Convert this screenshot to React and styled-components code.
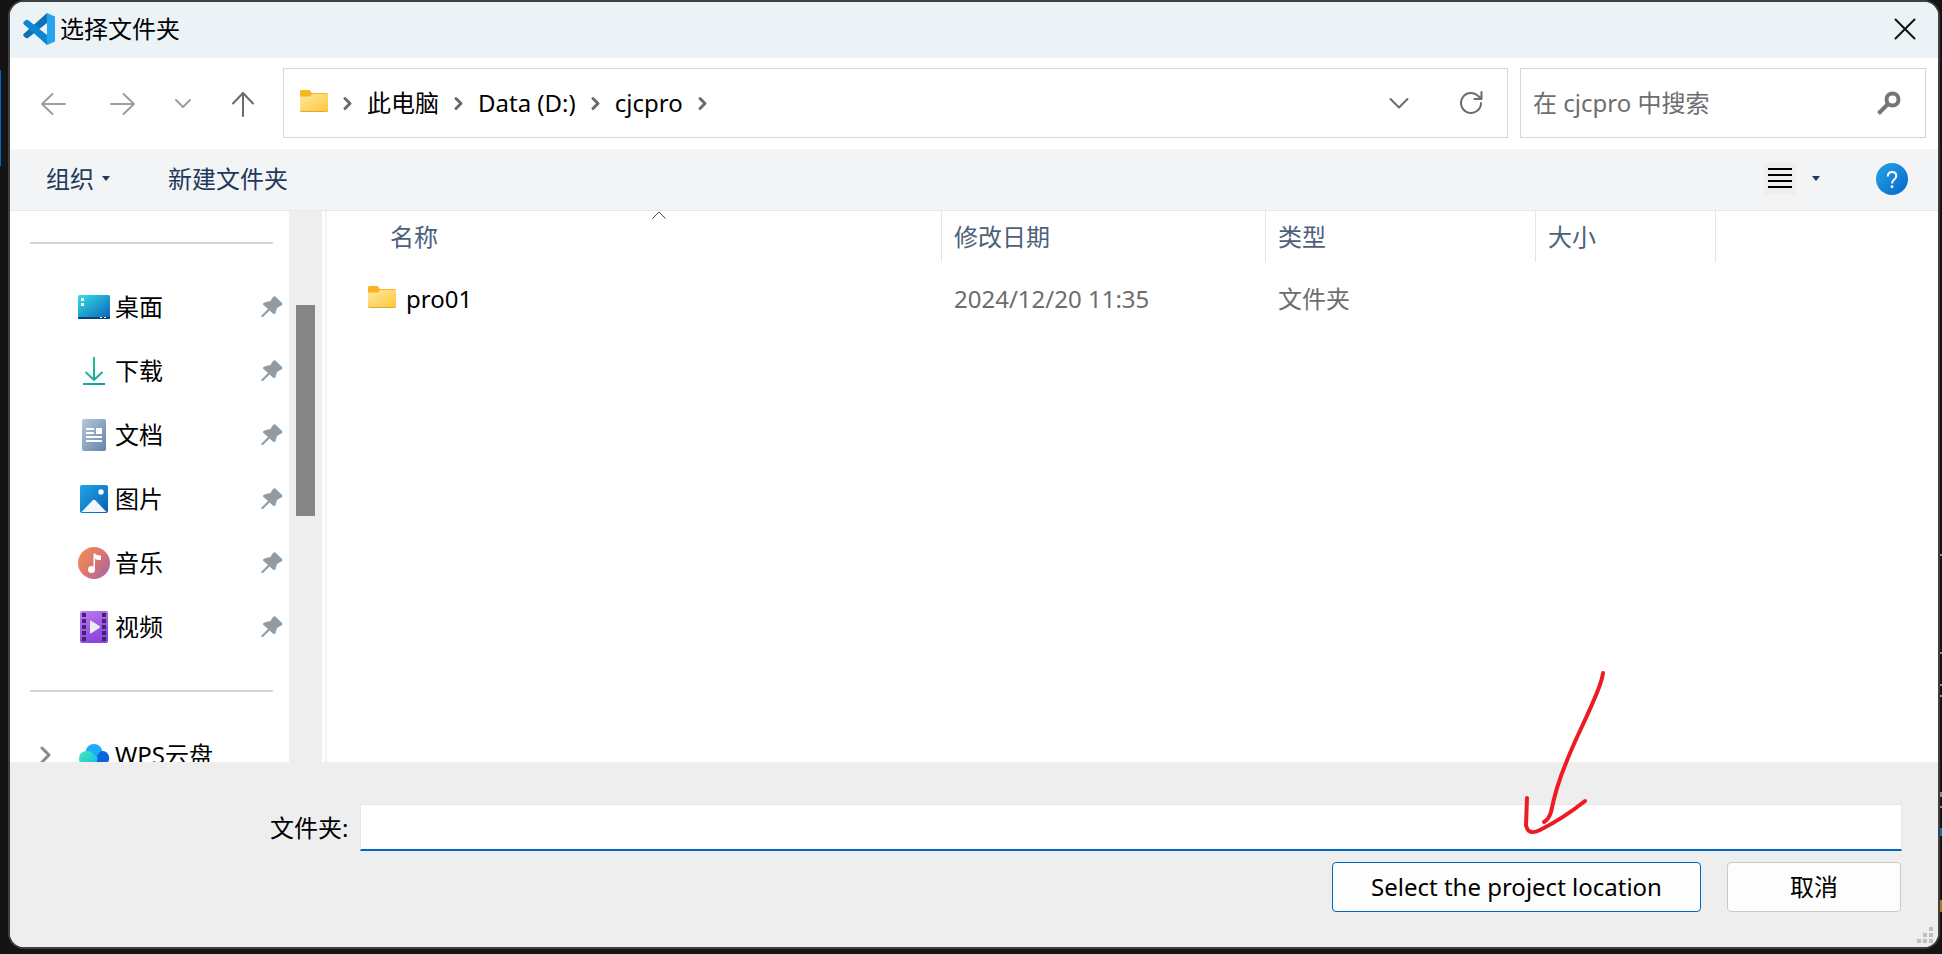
import React from 'react'
import styled, { createGlobalStyle } from 'styled-components'

const GlobalStyle = createGlobalStyle`
  * {
    box-sizing: border-box;
  }
  body {
    margin: 0;
    background: #141414;
    color: #000;
    font-family: "Noto Sans", "Noto Sans CJK SC", sans-serif;
    font-size: 24px;
    line-height: 32px;
  }
  button, input {
    font: inherit;
    color: inherit;
  }
  svg {
    display: block;
    flex: none;
  }
`
const Desktop = styled.div`
  position: relative;
  display: flex;
  height: 100vh;
  padding: 0 2px 5px 8px;
  overflow: hidden;
`
const EditorEdge = styled.svg`
  position: absolute;
  top: 0;
  ${props => props.$side}: 0;
`
const Dialog = styled.main`
  position: relative;
  flex: 1;
  min-width: 0;
  display: flex;
  flex-direction: column;
  border: 2px solid #404040;
  border-radius: 16px;
  background: #fff;
  overflow: hidden;
`
const TitleBar = styled.header`
  display: flex;
  align-items: center;
  gap: 5px;
  height: 56px;
  padding: 0 13px 2px;
  background: #ebf3f6;
`
const Title = styled.h1`
  flex: 1;
  margin: 0;
  font-size: 24px;
  font-weight: 400;
`
const IconButton = styled.button`
  flex: none;
  display: flex;
  align-items: center;
  justify-content: center;
  width: ${props => props.$width || 40}px;
  height: 40px;
  padding: 0;
  border: 0;
  background: none;
`
const AddressRow = styled.nav`
  display: flex;
  align-items: flex-start;
  gap: 12px;
  height: 91px;
  padding: 10px 12px 0 23px;
`
const NavButtons = styled.div`
  display: flex;
  align-items: center;
  gap: 20px;
  width: 238px;
  height: 72px;
`
const Crumbs = styled.div`
  flex: 1;
  display: flex;
  align-items: center;
  gap: 14px;
  height: 70px;
  padding: 0 16px;
  border: 1px solid #d6d6d6;
`
const Crumb = styled.a`
  color: #000;
  text-decoration: none;
`
const Spacer = styled.div`
  flex: 1;
`
const SearchBox = styled.label`
  display: flex;
  align-items: center;
  width: 406px;
  height: 70px;
  padding: 0 16px 0 12px;
  border: 1px solid #d6d6d6;
`
const SearchInput = styled.input`
  flex: 1;
  min-width: 0;
  padding: 0;
  border: 0;
  outline: 0;
  background: none;
  &::placeholder {
    color: #6d6d6d;
    opacity: 1;
  }
`
const Toolbar = styled.div`
  display: flex;
  align-items: center;
  height: 62px;
  padding: 0 26px 2px 36px;
  border-bottom: 1px solid #e5e6e8;
  background: #f3f4f6;
`
const ToolButton = styled.button`
  display: flex;
  align-items: center;
  gap: 8px;
  margin-right: 58px;
  padding: 0;
  border: 0;
  background: none;
  color: #1e395b;
`
const ViewButton = styled(ToolButton)`
  gap: 16px;
  margin-right: 52px;
`
const Body = styled.div`
  flex: 1;
  display: flex;
  min-height: 0;
`
const Sidebar = styled.aside`
  width: 279px;
  overflow: hidden;
`
const Divider = styled.hr`
  height: 2px;
  margin: 31px 16px 31px 20px;
  border: 0;
  background: #d5d5d5;
`
const Place = styled.a`
  display: flex;
  align-items: center;
  height: 64px;
  padding: 0 6px 0 28px;
  color: #000;
  text-decoration: none;
`
const Expander = styled.span`
  width: 40px;
`
const PlaceName = styled.span`
  flex: 1;
  padding-left: 5px;
`
const ScrollTrack = styled.div`
  width: 33px;
  padding: 94px 7px 0;
  background: #eee;
`
const ScrollThumb = styled.div`
  height: 211px;
  background: #858585;
`
const FilePane = styled.section`
  flex: 1;
  margin-left: 3px;
  border-left: 2px solid #f2f2f2;
`
const FileTable = styled.table`
  width: 100%;
  table-layout: fixed;
  border-collapse: separate;
  border-spacing: 0;
`
const HeadCell = styled.th`
  position: relative;
  width: ${props => (props.$width ? `${props.$width}px` : 'auto')};
  height: 51px;
  padding: 0 0 0 ${props => props.$indent || 12}px;
  border-right: ${props => (props.$width ? '1px solid #e5e5e5' : '0')};
  color: #4c607a;
  font-weight: 400;
  text-align: left;
`
const SortMark = styled.svg`
  position: absolute;
  top: 0;
  left: 53%;
`
const Cell = styled.td`
  height: 74px;
  padding: 0 0 0 12px;
  color: #6d6d6d;
`
const FileName = styled.div`
  display: flex;
  align-items: center;
  gap: 10px;
  padding-left: 29px;
  color: #000;
`
const Footer = styled.footer`
  height: 185px;
  padding: 42px 36px 0 260px;
  background: #eee;
`
const FieldRow = styled.label`
  display: flex;
  align-items: center;
  gap: 12px;
`
const FolderInput = styled.input`
  flex: 1;
  height: 47px;
  padding: 0 8px;
  border: 1px solid #e3e6ea;
  border-bottom: 2px solid #0067c0;
  outline: 0;
  background: #fff;
`
const Actions = styled.div`
  display: flex;
  justify-content: flex-end;
  gap: 26px;
  margin-top: 11px;
  padding-right: 1px;
`
const ActionButton = styled.button`
  width: ${props => props.$width}px;
  height: 50px;
  padding: 0;
  border: 1px solid ${props => (props.$primary ? '#0067c0' : '#cacaca')};
  border-radius: 4px;
  background: #fdfdfd;
`
const Grip = styled.svg`
  position: absolute;
  right: 5px;
  bottom: 4px;
`
const Marker = styled.svg`
  position: absolute;
  right: 318px;
  bottom: 102px;
`

const Stroke = ({ w, h, d, color = '#6b6b6b', weight = 2 }) => (
  <svg width={w} height={h} viewBox={`0 0 ${w} ${h}`} fill="none" stroke={color} strokeWidth={weight} strokeLinecap="round" strokeLinejoin="round">
    <path d={d} />
  </svg>
)

const Chevron = () => <Stroke w={11} h={16} d="M3 3.500 8 8.500 3 13.500" weight={3} />

const Caret = () => (
  <svg width="8" height="5" viewBox="0 0 8 5"><path d="M0 0h8L4 5z" fill="#1e395b" /></svg>
)

const CodeLogo = () => (
  <svg width="32" height="32" viewBox="0 0 32 32">
    <path d="M24 0 .8 20.800Q-.3 22 .8 23.200L3 25Q4 25.600 5 25L24 10z" fill="#0f72b5" />
    <path d="M24 32 .8 11.200Q-.3 10 .8 8.800L3 7Q4 6.400 5 7L24 22z" fill="#0a87d0" />
    <path d="M24 0 32 3.500V28.500L24 32z" fill="#28a4ee" />
  </svg>
)

const FolderIcon = () => (
  <svg width="28" height="26" viewBox="0 0 28 26">
    <defs>
      <linearGradient id="folder" x1="0" y1="0" x2="1" y2="1">
        <stop offset="0" stopColor="#ffe8a4" />
        <stop offset="1" stopColor="#fdc736" />
      </linearGradient>
    </defs>
    <path d="M0 1.500Q0 0 1.500 0H9.500L12 3H26.500Q28 3 28 4.500V10H0z" fill="#f9b41f" />
    <path d="M0 6.500H10L12.500 4H28V20.500Q28 22 26.500 22H1.500Q0 22 0 20.500z" fill="url(#folder)" />
    <path d="M.5 20.500Q.5 21.500 1.500 21.500H26.500Q27.500 21.500 27.500 20.500" fill="none" stroke="#e7a62b" />
  </svg>
)

const PinIcon = () => (
  <svg width="22" height="22" viewBox="0 0 22 22">
    <path d="M12 1Q13.500-.5 15 1L21 7Q22 8.500 20.500 9.500L16 12 14.500 17Q13.500 19 12 17.500L8.500 14.500 2 21H.5V19.500L7 13 2.500 9Q1 7.500 3.500 6.500L9.500 5z" fill="#919ba1" />
  </svg>
)

const placeIcons = {
  desktop: (
    <>
      <defs>
        <linearGradient id="desk" x1="0" y1="0" x2="1" y2="1">
          <stop offset="0" stopColor="#35dce8" />
          <stop offset="1" stopColor="#0b62b6" />
        </linearGradient>
      </defs>
      <rect y="4" width="32" height="24" rx="1.500" fill="url(#desk)" />
      <path d="M0 26h32v.5q0 1.500-1.500 1.500h-29Q0 28 0 26.500z" fill="#0b4275" />
      <path d="M3 7h3v3H3zM3 12h3v3H3zM22 26h2v1h-2zM26 26h2v1h-2z" fill="#fff" />
    </>
  ),
  download: (
    <>
      <defs>
        <linearGradient id="down" gradientUnits="userSpaceOnUse" x1="5" y1="2" x2="27" y2="30">
          <stop offset="0" stopColor="#33c481" />
          <stop offset="1" stopColor="#0c9caf" />
        </linearGradient>
      </defs>
      <path d="M16 2v23M7.500 17l8.500 8 8.500-8M5 29h22" fill="none" stroke="url(#down)" strokeWidth="2" />
    </>
  ),
  document: (
    <>
      <defs>
        <linearGradient id="doc" x1="0" y1="0" x2="1" y2="1">
          <stop offset="0" stopColor="#b3c8dd" />
          <stop offset="1" stopColor="#6583a8" />
        </linearGradient>
      </defs>
      <rect x="4" width="24" height="32" rx="2" fill="url(#doc)" />
      <path d="M8 9h8v2H8zM8 13h8v2H8zM18 9h6v6h-6zM8 17h16v2H8zM8 21h16v2H8z" fill="#fff" />
    </>
  ),
  picture: (
    <>
      <defs>
        <linearGradient id="pic" x1="0" y1="0" x2="1" y2="1">
          <stop offset="0" stopColor="#1fa5e8" />
          <stop offset="1" stopColor="#0a5fb0" />
        </linearGradient>
      </defs>
      <rect x="2" y="2" width="28" height="28" rx="2" fill="url(#pic)" />
      <path d="M3.500 29 14.500 17.500Q16 16 17.500 17.500L28.500 29z" fill="#f0f7fd" />
      <circle cx="23" cy="9" r="2.700" fill="#fff" />
    </>
  ),
  music: (
    <>
      <defs>
        <linearGradient id="mus" x1="0" y1=".2" x2="1" y2=".9">
          <stop offset="0" stopColor="#f18c54" />
          <stop offset=".5" stopColor="#d9766f" />
          <stop offset="1" stopColor="#a164ad" />
        </linearGradient>
      </defs>
      <circle cx="16" cy="16" r="16" fill="url(#mus)" />
      <circle cx="13.500" cy="22.500" r="3.500" fill="#fff" />
      <path d="M15.500 6.500h1.500Q19 9 23 8.500V13Q19 13.500 17 11.500V22.500h-1.500z" fill="#fff" />
    </>
  ),
  video: (
    <>
      <defs>
        <linearGradient id="vid" x1="0" y1="0" x2=".4" y2="1">
          <stop offset="0" stopColor="#bb7cf2" />
          <stop offset="1" stopColor="#8a45e0" />
        </linearGradient>
      </defs>
      <rect x="2" width="28" height="32" rx="2" fill="url(#vid)" />
      <path d="M6 2v28M26 2v28" stroke="#43246e" strokeWidth="4" strokeDasharray="4 2" />
      <path d="M12 10.500Q12 9 13.500 10L21.500 15Q22.500 16 21.500 17L13.500 22Q12 23 12 21.500z" fill="#eee" />
    </>
  ),
  cloud: (
    <>
      <defs>
        <linearGradient id="cloud" x1="0" y1="0" x2="1" y2="1">
          <stop offset="0" stopColor="#46efae" />
          <stop offset="1" stopColor="#10b6f8" />
        </linearGradient>
      </defs>
      <circle cx="16" cy="13.500" r="8.500" fill="#1eabfb" />
      <path d="M17 20 21 14Q24 10.500 28 13Q32 16 31 21Q29 27 24 27H12z" fill="#0d63dd" />
      <path d="M17 27H9Q1 26 1 19.500Q1 12 9 12Q14 12 16 16L20 19z" fill="url(#cloud)" />
    </>
  ),
}

const places = [
  { name: '桌面', icon: 'desktop' },
  { name: '下载', icon: 'download' },
  { name: '文档', icon: 'document' },
  { name: '图片', icon: 'picture' },
  { name: '音乐', icon: 'music' },
  { name: '视频', icon: 'video' },
]
const crumbs = ['此电脑', 'Data (D:)', 'cjcpro']
const files = [
  { name: 'pro01', modified: '2024/12/20 11:35', type: '文件夹' },
]

const PlaceIcon = ({ name }) => (
  <svg width="32" height="32" viewBox="0 0 32 32">{placeIcons[name]}</svg>
)

const App = () => (
  <Desktop>
    <GlobalStyle />
    <EditorEdge $side="left" width="8" height="166">
      <path d="M0 70h1v96H0z" fill="#0067c0" />
    </EditorEdge>
    <EditorEdge $side="right" width="2" height="954">
      <path d="M0 828h2v8H0z" fill="#0f6cb8" />
      <path d="M0 554h2v2H0zM0 652h2v2H0zM0 684h2v2H0zM0 695h2v2H0zM0 792h2v5H0zM0 806h2v2H0z" fill="#8d8d8d" />
      <path d="M0 900h2v12H0z" fill="#a5792b" />
    </EditorEdge>
    <Dialog>
      <TitleBar>
        <CodeLogo />
        <Title>选择文件夹</Title>
        <IconButton aria-label="关闭">
          <Stroke w={22} h={22} d="M1.500 1.500l19 19M20.500 1.500l-19 19" color="#111" />
        </IconButton>
      </TitleBar>
      <AddressRow>
        <NavButtons>
          <IconButton aria-label="后退">
            <Stroke w={26} h={24} d="M25 12H2M12.500 2 2 12l10.500 10" color="#9e9e9e" />
          </IconButton>
          <IconButton $width={60} aria-label="前进">
            <Stroke w={26} h={24} d="M1 12h23M13.500 2 24 12 13.500 22" color="#9e9e9e" />
          </IconButton>
          <IconButton $width={20} aria-label="最近浏览的位置">
            <Stroke w={18} h={12} d="M2 2l7 7 7-7" color="#9e9e9e" />
          </IconButton>
          <IconButton $width={60} aria-label="上移">
            <Stroke w={24} h={26} d="M12 25V2M2 12.500 12 2l10 10.500" />
          </IconButton>
        </NavButtons>
        <Crumbs>
          <FolderIcon />
          <Chevron />
          {crumbs.map(name => (
            <React.Fragment key={name}>
              <Crumb href="#">{name}</Crumb>
              <Chevron />
            </React.Fragment>
          ))}
          <Spacer />
          <IconButton $width={76} aria-label="以前的位置">
            <Stroke w={20} h={13} d="M1.500 2 10 10.500 18.500 2" />
          </IconButton>
          <IconButton aria-label="刷新">
            <Stroke w={24} h={24} d="M22 12a10 10 0 1 1-4-8L22 7.500M22.500 1v7H15.500" />
          </IconButton>
        </Crumbs>
        <SearchBox>
          <SearchInput placeholder="在 cjcpro 中搜索" aria-label="搜索" />
          <IconButton aria-label="搜索">
            <svg width="24" height="24" viewBox="0 0 24 24" fill="none" stroke="#767676">
              <circle cx="15.500" cy="8.500" r="6" strokeWidth="4" />
              <path d="M11 13 1.500 22.500" strokeWidth="4" />
            </svg>
          </IconButton>
        </SearchBox>
      </AddressRow>
      <Toolbar>
        <ToolButton>组织<Caret /></ToolButton>
        <ToolButton>新建文件夹</ToolButton>
        <Spacer />
        <ViewButton aria-label="更改视图">
          <svg width="32" height="32" viewBox="0 0 32 32">
            <rect width="32" height="32" rx="4" fill="#efefef" />
            <path d="M4 6h24M4 12h24M4 18h24M4 24h24" stroke="#000" strokeWidth="2" />
          </svg>
          <Caret />
        </ViewButton>
        <IconButton $width={40} aria-label="帮助">
          <svg width="32" height="32" viewBox="0 0 32 32">
            <defs>
              <linearGradient id="help" x1="0" y1="0" x2="1" y2="1">
                <stop offset="0" stopColor="#27a4e6" />
                <stop offset="1" stopColor="#0467cb" />
              </linearGradient>
            </defs>
            <circle cx="16" cy="16" r="16" fill="url(#help)" />
            <path d="M11.800 13.500q0-4.500 4.300-4.500 4.200 0 4.200 4 0 2-2.500 4-1.700 1.300-1.700 3.500" fill="none" stroke="#fff" strokeWidth="2" />
            <circle cx="16" cy="23.700" r="1.400" fill="#fff" />
          </svg>
        </IconButton>
      </Toolbar>
      <Body>
        <Sidebar>
          <Divider />
          {places.map(place => (
            <Place href="#" key={place.name}>
              <Expander />
              <PlaceIcon name={place.icon} />
              <PlaceName>{place.name}</PlaceName>
              <PinIcon />
            </Place>
          ))}
          <Divider />
          <Place href="#">
            <Expander><Stroke w={14} h={20} d="M4 3l7 7-7 7" color="#8a8a8a" weight={3} /></Expander>
            <PlaceIcon name="cloud" />
            <PlaceName>WPS云盘</PlaceName>
          </Place>
        </Sidebar>
        <ScrollTrack><ScrollThumb /></ScrollTrack>
        <FilePane>
          <FileTable>
            <thead>
              <tr>
                <HeadCell $width={615} $indent={63}>
                  名称
                  <SortMark width="14" height="8" viewBox="0 0 14 8" fill="none" stroke="#444">
                    <path d="M.5 7.500 7 1l6.500 6.500" />
                  </SortMark>
                </HeadCell>
                <HeadCell $width={324}>修改日期</HeadCell>
                <HeadCell $width={270}>类型</HeadCell>
                <HeadCell $width={180}>大小</HeadCell>
                <HeadCell as="td" />
              </tr>
            </thead>
            <tbody>
              {files.map(file => (
                <tr key={file.name}>
                  <Cell><FileName><FolderIcon />{file.name}</FileName></Cell>
                  <Cell>{file.modified}</Cell>
                  <Cell>{file.type}</Cell>
                  <Cell />
                  <Cell />
                </tr>
              ))}
            </tbody>
          </FileTable>
        </FilePane>
      </Body>
      <Footer>
        <FieldRow>
          文件夹:
          <FolderInput />
        </FieldRow>
        <Actions>
          <ActionButton $primary $width={369}>Select the project location</ActionButton>
          <ActionButton $width={174}>取消</ActionButton>
        </Actions>
      </Footer>
      <Grip width="16" height="16" viewBox="0 0 16 16">
        <path d="M12 0h4v4h-4zM6 6h4v4H6zM12 6h4v4h-4zM0 12h4v4H0zM6 12h4v4H6zM12 12h4v4h-4z" fill="#bfbfbf" />
      </Grip>
      <Marker width="100" height="180" viewBox="1520 665 100 180" fill="none" stroke="#ed1c24" strokeWidth="4" strokeLinecap="round" strokeLinejoin="round">
        <path d="M1603 673Q1602 680 1598 690C1588 716 1575 739 1566 763Q1556 787 1551 812Q1549 819 1544 822" />
        <path d="M1527 798 1526 825Q1528 836 1540 830C1556 822 1570 813 1585 801" />
      </Marker>
    </Dialog>
  </Desktop>
)

export default App
